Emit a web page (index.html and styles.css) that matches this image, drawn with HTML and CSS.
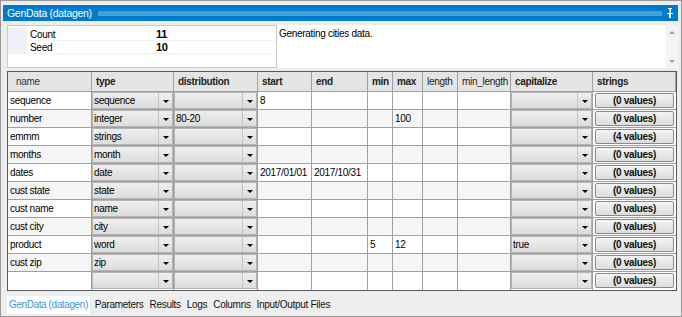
FILE: index.html
```html
<!DOCTYPE html>
<html>
<head>
<meta charset="utf-8">
<link rel="stylesheet" href="styles.css">
</head>
<body>
<div class="window">
  <div class="titlebar">
    <span class="title">GenData (datagen)</span>
    <span class="dots"></span>
    <svg class="pin" width="8" height="10" viewBox="0 0 8 10"><path d="M2 0h4v1h-1v4h2v1H5v4H3V6H1V5h2V1H2z" fill="#fff"/><rect x="3" y="1" width="1" height="4" fill="#7fbde6"/></svg>
  </div>
  <div class="toppanel">
    <div class="props">
      <div class="prow"><span class="pmargin"></span><span class="pname">Count</span><span class="pval">11</span></div>
      <div class="prow"><span class="pmargin"></span><span class="pname">Seed</span><span class="pval">10</span></div>
    </div>
    <div class="desc">
      <div class="desctext">Generating cities data.</div>
      <div class="scroll"><span class="sup"></span><span class="sdown"></span></div>
    </div>
  </div>
  <div class="gridwrap">
    <div class="grid" id="grid">
      <div class="h">name</div><div class="h b">type</div><div class="h b">distribution</div><div class="h b">start</div><div class="h b">end</div><div class="h b">min</div><div class="h b">max</div><div class="h">length</div><div class="h">min_length</div><div class="h b">capitalize</div><div class="h b">strings</div>
    </div>
  </div>
  <div class="tabs">
    <span class="tab active">GenData (datagen)</span>
    <span class="tab">Parameters</span>
    <span class="tab">Results</span>
    <span class="tab">Logs</span>
    <span class="tab">Columns</span>
    <span class="tab">Input/Output Files</span>
  </div>
</div>
<script src="app.js"></script>
</body>
</html>
```
FILE: app.js
```js
const rows = [
  ["sequence","sequence","","8","","","","","","","(0 values)"],
  ["number","integer","80-20","","","","100","","","","(0 values)"],
  ["emmm","strings","","","","","","","","","(4 values)"],
  ["months","month","","","","","","","","","(0 values)"],
  ["dates","date","","2017/01/01","2017/10/31","","","","","","(0 values)"],
  ["cust state","state","","","","","","","","","(0 values)"],
  ["cust name","name","","","","","","","","","(0 values)"],
  ["cust city","city","","","","","","","","","(0 values)"],
  ["product","word","","","","5","12","","","true","(0 values)"],
  ["cust zip","zip","","","","","","","","","(0 values)"],
  ["","","","","","","","","","","(0 values)"]
];
const g = document.getElementById('grid');
rows.forEach((r, i) => {
  const alt = i % 2 === 1 ? ' alt' : '';
  r.forEach((v, j) => {
    const c = document.createElement('div');
    c.className = 'c' + alt;
    if (j === 1 || j === 2 || j === 9) {
      c.className += ' cb';
      c.innerHTML = '<div class="combo"><span class="ctext"></span><span class="carrow"><i></i></span></div>';
      c.querySelector('.ctext').textContent = v;
    } else if (j === 10) {
      c.className += ' bt';
      c.innerHTML = '<div class="btn"></div>';
      c.querySelector('.btn').textContent = v;
    } else {
      c.textContent = v;
    }
    g.appendChild(c);
  });
});
```
FILE: styles.css
```css
* { box-sizing: border-box; }
html, body { margin: 0; padding: 0; }
body { font-family: "Liberation Sans", Arial, sans-serif; font-size: 10px; letter-spacing: -0.3px; color: #000; background: #f0f0f0; }
.window {
  width: 682px; height: 317px;
  border: 1px solid #999;
  background: #eeeeee;
  padding: 4px 3px 0 2px;
  display: flex; flex-direction: column;
}
.titlebar {
  height: 16px; background: #007acc;
  display: flex; align-items: center;
  padding: 0 4px 0 4px;
}
.title { color: #fff; font-size: 10.5px; white-space: nowrap; margin-right: 6px; }
.dots {
  flex: 1; height: 5px;
  background-image: radial-gradient(circle, #4aa3e0 0.7px, transparent 0.8px);
  background-size: 2px 2px;
  margin-right: 4px;
}
.pin { display: block; }
.toppanel {
  margin-top: 4px; height: 43px;
  display: flex; padding-left: 4px;
}
.props {
  width: 270px; background: #fff;
  border: 1px solid #c8c8c8;
  padding-top: 2px;
}
.prow { display: flex; height: 13px; align-items: center; }
.pmargin { width: 19px; height: 13px; background: #eef1f7; }
.pname { width: 127px; padding-left: 3px; height: 13px; line-height: 13px; border-bottom: 1px solid #f3f3f3; }
.pval { flex: 1; font-weight: bold; font-size: 11px; height: 13px; line-height: 13px; padding-left: 2px; border-bottom: 1px solid #f3f3f3; }
.desc { flex: 1; background: #fff; display: flex; }
.desctext { flex: 1; padding: 3px 0 0 2px; }
.scroll { width: 12px; background: #f4f4f4; display: flex; flex-direction: column; justify-content: space-between; align-items: center; padding: 6px 0 5px; }
.sup, .sdown { width: 0; height: 0; border-left: 3px solid transparent; border-right: 3px solid transparent; }
.sup { border-bottom: 3px solid #a0a0a0; }
.sdown { border-top: 3px solid #a0a0a0; }
.gridwrap { margin-top: 3px; padding-left: 4px; }
.grid {
  display: grid;
  grid-template-columns: 84px 82px 84px 54px 56px 25px 30px 35px 53px 82px 83px;
  width: 670px;
  border: 1px solid #5a5a5a;
  background: #fff;
}
.h {
  height: 20px; background: #e4e4e4;
  border-right: 1px solid #a0a0a0; border-bottom: 1px solid #a0a0a0;
  padding: 0 0 0 4px; line-height: 19px; white-space: nowrap; overflow: hidden;
  color: #222;
}
.h:first-child { padding-left: 8px; color: #333; }
.h.b { font-weight: bold; }
.c {
  height: 18px; background: #fff;
  border-right: 1px solid #a0a0a0; border-bottom: 1px solid #a0a0a0;
  padding-left: 2px; line-height: 17px; white-space: nowrap; overflow: hidden;
}
.c.alt { background: #f5f5f5; }
.c:nth-child(11n) { border-right: none; }
.grid > .c:nth-last-child(-n+11) { border-bottom: none; }
.c.cb { padding: 0; }
.combo {
  display: flex; height: 17px;
  border: 1px solid #b4b4b4;
  background: linear-gradient(#efefef, #dcdcdc);
}
.ctext { flex: 1; padding-left: 1px; line-height: 15px; overflow: hidden; }
.carrow { width: 14px; border-left: 1px solid #c4c4c4; display: flex; align-items: center; justify-content: center; }
.carrow i { width: 0; height: 0; border-left: 3px solid transparent; border-right: 3px solid transparent; border-top: 3px solid #000; margin-top: 1px; }
.c.bt { padding: 1px 2px 1px 2px; background: #fff; }
.c.bt.alt { background: #f5f5f5; }
.btn {
  height: 15px; border: 1px solid #8a8a8a; border-radius: 2px;
  background: linear-gradient(#f4f4f4, #dcdcdc);
  font-weight: bold; text-align: center; line-height: 13px; color: #111;
}
.tabs { margin-top: 5px; display: flex; padding-left: 4px; height: 18px; align-items: stretch; }
.tab { padding: 0 3px; line-height: 18px; color: #111; margin-right: 0; }
.tab.active { background: #fff; color: #3c96dc; padding: 0 2px 0 2px; margin-right: 2px; letter-spacing: -0.4px; }
```
